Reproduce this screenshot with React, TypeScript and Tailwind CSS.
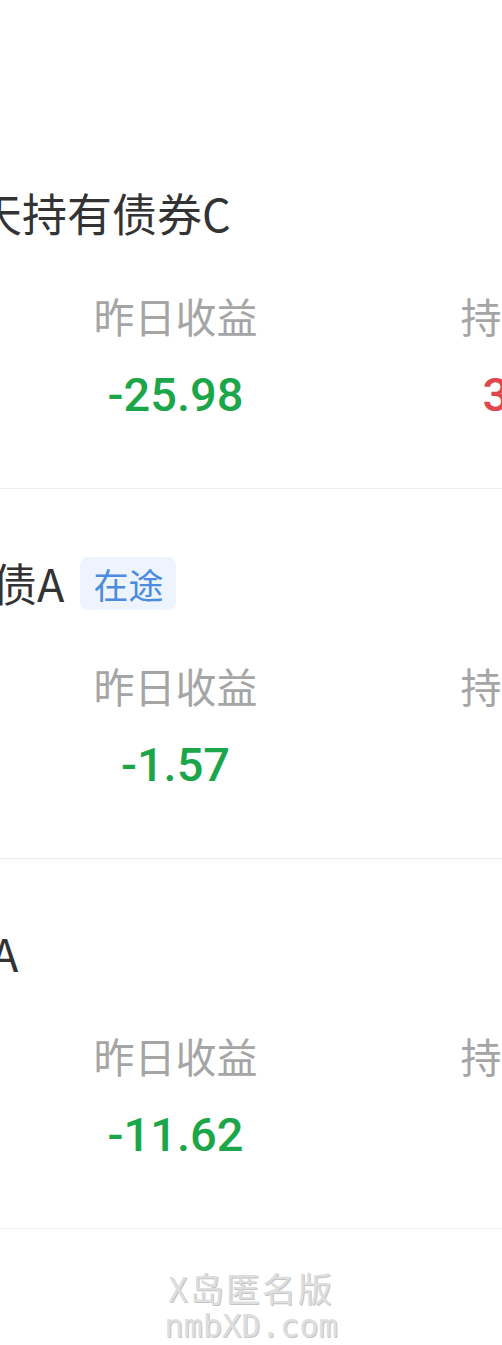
import React from 'react';

interface FundRow {
  title: string;
  titleOffset: string;
  tag?: string;
  yesterday: string;
  holding: string;
  holdingTone: string;
}

const rows: FundRow[] = [
  {
    title: '天持有债券C',
    titleOffset: 'ml-[-23px]',
    yesterday: '-25.98',
    holding: '31.46',
    holdingTone: 'text-[#e0464f]',
  },
  {
    title: '债A',
    titleOffset: 'ml-[-8px]',
    tag: '在途',
    yesterday: '-1.57',
    holding: '--',
    holdingTone: 'text-[#a5a5a5]',
  },
  {
    title: 'A',
    titleOffset: 'ml-[-9px]',
    yesterday: '-11.62',
    holding: '--',
    holdingTone: 'text-[#a5a5a5]',
  },
];

const Stat: React.FC<{ label: string; value: string; tone: string }> = ({ label, value, tone }) => (
  <div className="w-[367px] shrink-0 flex flex-col items-center">
    <div className="text-[41px] leading-[56px] text-[#a5a5a5] whitespace-nowrap">{label}</div>
    <div
      className={`mt-[22px] text-[47px] leading-[60px] font-medium font-['Roboto',sans-serif] whitespace-nowrap ${tone}`}
    >
      {value}
    </div>
  </div>
);

const FundItem: React.FC<{ row: FundRow }> = ({ row }) => (
  <section className="h-[370px] pt-[64px] border-b border-[#ededed]">
    <div className="flex items-center h-[60px] whitespace-nowrap">
      <span className={`${row.titleOffset} text-[45px] leading-[60px] text-[#333333]`}>{row.title}</span>
      {row.tag && (
        <span className="ml-[16px] h-[53px] px-[13px] rounded-[8px] bg-[#eef4fd] text-[#4b8be0] text-[35px] leading-[53px]">
          {row.tag}
        </span>
      )}
    </div>

    <div className="flex ml-[-8px] mt-[44px]">
      <Stat label="昨日收益" value={row.yesterday} tone="text-[#1ba64a]" />
      <Stat label="持有收益" value={row.holding} tone={row.holdingTone} />
      <Stat label="累计收益" value="--" tone="text-[#a5a5a5]" />
    </div>
  </section>
);

export default function App() {
  return (
    <div className="w-full h-[1345px] overflow-hidden bg-white font-['Noto_Sans_CJK_SC',sans-serif]">
      <div className="pt-[119px]">
        {rows.map(row => (
          <FundItem key={row.yesterday} row={row} />
        ))}
      </div>

      {/* watermark */}
      <div className="flex flex-col items-center pt-[38px] text-[#dedede] select-none [text-shadow:1px_1px_0_#c4c4c4]">
        <div className="text-[34px] leading-[42px] tracking-[2px]">X岛匿名版</div>
        <div className="text-[32px] leading-[34px] font-['DejaVu_Sans_Mono',monospace]">nmbXD.com</div>
      </div>
    </div>
  );
}
